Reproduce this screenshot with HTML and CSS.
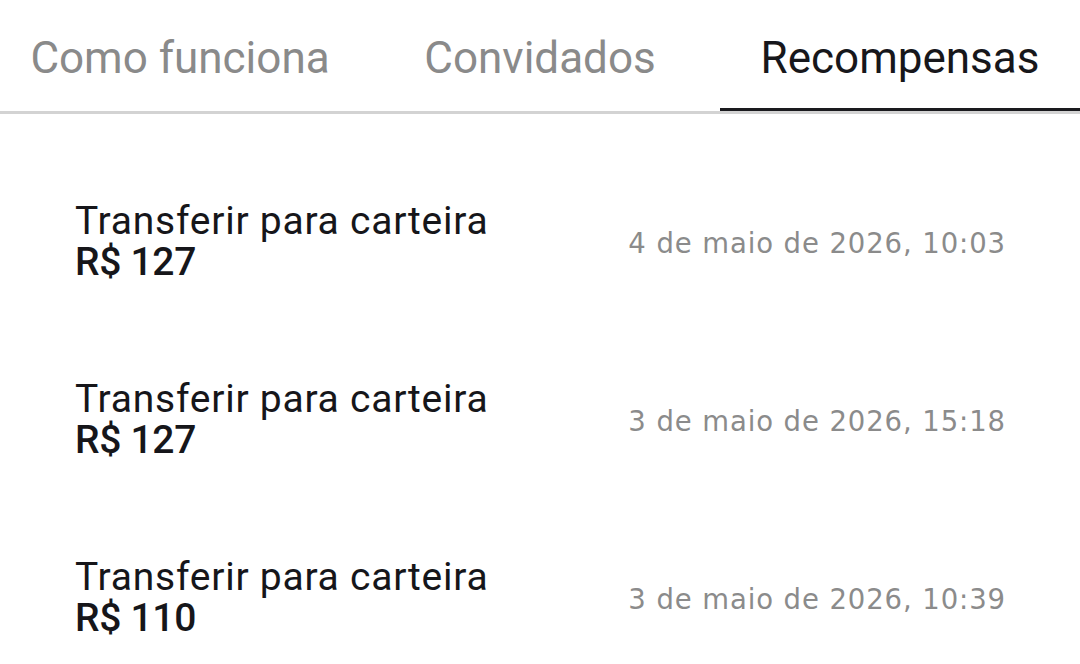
FILE: index.html
```html
<!DOCTYPE html>
<html lang="pt-BR">
<head>
<meta charset="utf-8">
<title>Recompensas</title>
<link rel="stylesheet" href="styles.css">
</head>
<body>
<nav class="tabs">
  <div class="tab">Como funciona</div>
  <div class="tab">Convidados</div>
  <div class="tab active">Recompensas</div>
</nav>
<ul class="list">
  <li class="row">
    <div class="info">
      <div class="title">Transferir para carteira</div>
      <div class="amount">R$ 127</div>
    </div>
    <div class="date">4 de maio de 2026, 10:03</div>
  </li>
  <li class="row">
    <div class="info">
      <div class="title">Transferir para carteira</div>
      <div class="amount">R$ 127</div>
    </div>
    <div class="date">3 de maio de 2026, 15:18</div>
  </li>
  <li class="row">
    <div class="info">
      <div class="title">Transferir para carteira</div>
      <div class="amount">R$ 110</div>
    </div>
    <div class="date">3 de maio de 2026, 10:39</div>
  </li>
</ul>
</body>
</html>
```
FILE: styles.css
```css
html, body {
  margin: 0;
  padding: 0;
  background: #ffffff;
}
body {
  font-family: Roboto, "Liberation Sans", sans-serif;
  color: #16161a;
  width: 1080px;
  height: 664px;
  overflow: hidden;
}
.tabs {
  display: grid;
  grid-template-columns: 360px 360px 360px;
  border-bottom: 3px solid #d3d3d3;
}
.tab {
  height: 44px;
  padding: 36px 0 28px;
  line-height: 44px;
  font-size: 44px;
  text-align: center;
  color: #8a8a8a;
  border-bottom: 3px solid transparent;
}
.tab.active {
  color: #17171b;
  border-bottom-color: #1a1a1e;
}
.list {
  list-style: none;
  margin: 0;
  padding: 39px 0 0;
}
.row {
  display: flex;
  align-items: center;
  justify-content: space-between;
  padding: 48px 75px 48px 75px;
}
.title {
  font-size: 39px;
  line-height: 41px;
  letter-spacing: 0.75px;
}
.amount {
  font-size: 39px;
  line-height: 41px;
  font-weight: 500;
  letter-spacing: -0.3px;
}
.date {
  font-family: "DejaVu Sans", Roboto, sans-serif;
  font-size: 27.5px;
  line-height: 32px;
  color: #8b8b8b;
  padding-top: 2px;
  letter-spacing: 0.9px;
  margin-right: -1px;
}
```
